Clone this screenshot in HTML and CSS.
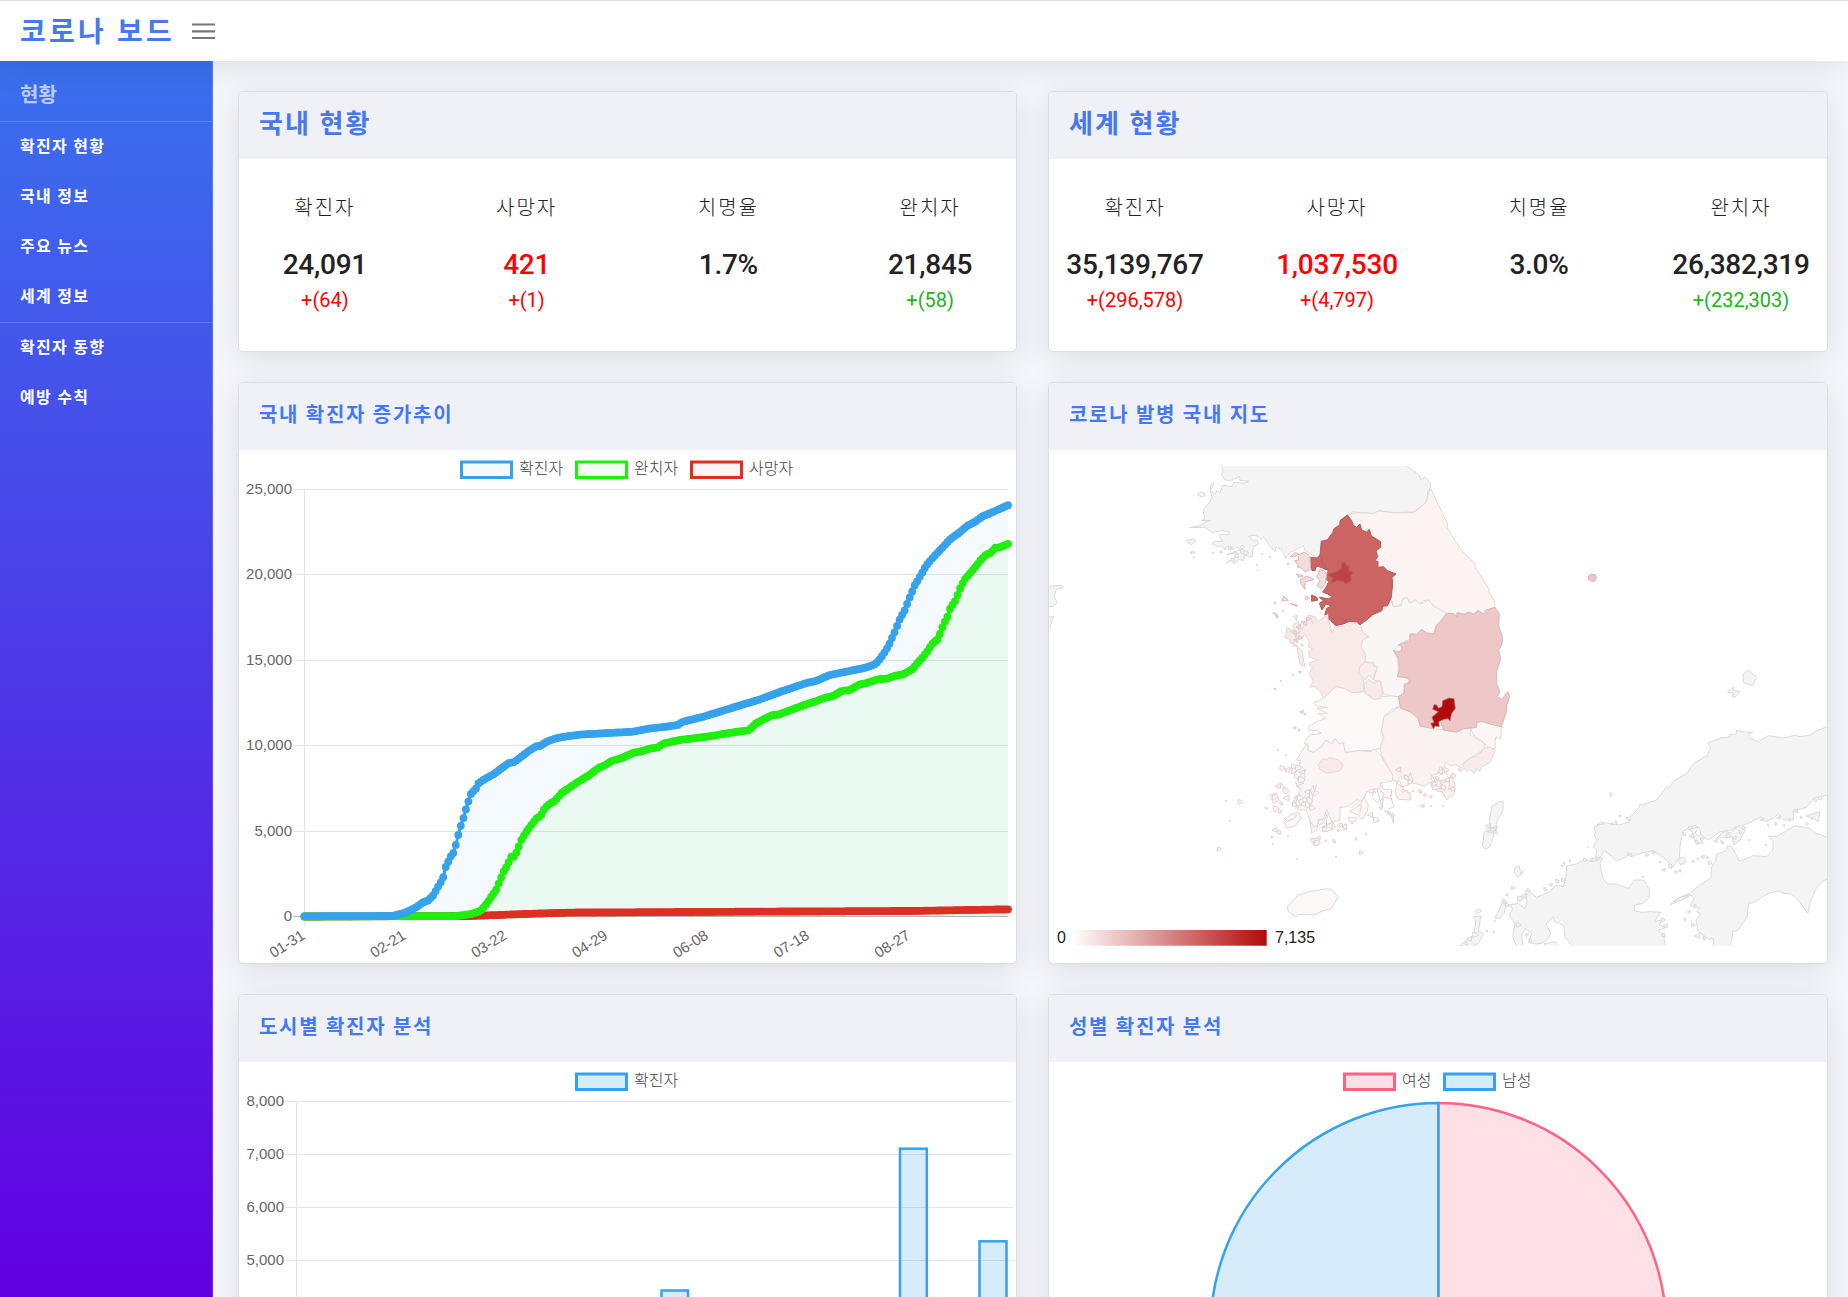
FILE: index.html
```html
<!DOCTYPE html>
<html lang="ko">
<head>
<meta charset="utf-8">
<title>코로나 보드</title>
<link rel="stylesheet" href="styles.css">
</head>
<body>
<header class="topbar">
  <a class="brand">코로나 보드</a>
  <svg class="menu-icon" width="23" height="17" viewBox="0 0 23 17"><path d="M0 1.5H23M0 8.3H23M0 15H23"/></svg>
</header>
<div class="shell">
  <nav class="sidebar">
    <div class="side-title">현황</div>
    <a class="side-link first">확진자 현황</a>
    <a class="side-link">국내 정보</a>
    <a class="side-link">주요 뉴스</a>
    <a class="side-link">세계 정보</a>
    <a class="side-link first">확진자 동향</a>
    <a class="side-link">예방 수칙</a>
  </nav>
  <main class="content">
    <section class="card">
      <h2 class="card-head big">국내 현황</h2>
      <div class="stats">
        <div class="stat"><span class="label">확진자</span><b class="num">24,091</b><span class="diff red">+(64)</span></div>
        <div class="stat"><span class="label">사망자</span><b class="num red">421</b><span class="diff red">+(1)</span></div>
        <div class="stat"><span class="label">치명율</span><b class="num">1.7%</b></div>
        <div class="stat"><span class="label">완치자</span><b class="num">21,845</b><span class="diff green">+(58)</span></div>
      </div>
    </section>
    <section class="card">
      <h2 class="card-head big">세계 현황</h2>
      <div class="stats">
        <div class="stat"><span class="label">확진자</span><b class="num">35,139,767</b><span class="diff red">+(296,578)</span></div>
        <div class="stat"><span class="label">사망자</span><b class="num red">1,037,530</b><span class="diff red">+(4,797)</span></div>
        <div class="stat"><span class="label">치명율</span><b class="num">3.0%</b></div>
        <div class="stat"><span class="label">완치자</span><b class="num">26,382,319</b><span class="diff green">+(232,303)</span></div>
      </div>
    </section>

    <section class="card">
      <h2 class="card-head">국내 확진자 증가추이</h2>
      <svg class="plot" width="777" height="512" viewBox="239 450 777 512">
        <g class="grid">
          <path d="M293 489.5H1008M293 574.5H1008M293 660.5H1008M293 745.5H1008M293 831.5H1008M304.5 489V926"/>
          <path class="zero" d="M293 916.5H1008"/>
        </g>
        <g class="key">
          <rect x="461.500" y="462" width="50" height="15.500" stroke="#36a2eb" fill="#f5fafe"/><text x="519" y="473.500">확진자</text>
          <rect x="576.500" y="462" width="50" height="15.500" stroke="#1fee0f" fill="#f3fef2"/><text x="634" y="473.500">완치자</text>
          <rect x="691.500" y="462" width="50" height="15.500" stroke="#dd2f24" fill="#fef4f4"/><text x="749" y="473.500">사망자</text>
        </g>
        <g class="tick end">
          <text x="292" y="493.500">25,000</text><text x="292" y="578.500">20,000</text><text x="292" y="664.500">15,000</text>
          <text x="292" y="749.500">10,000</text><text x="292" y="835.500">5,000</text><text x="292" y="920.500">0</text>
        </g>
        <g id="dates" class="tick end"></g>
        <g id="areas"></g>
        <g id="trend"></g>
      </svg>
    </section>

    <section class="card">
      <h2 class="card-head">코로나 발병 국내 지도</h2>
      <svg class="plot" width="778" height="512" viewBox="1049 450 778 512">
        <defs>
          <linearGradient id="scale"><stop offset="0" stop-color="#fff"/><stop offset="1" stop-color="#b10b0b"/></linearGradient>
          <clipPath id="frame"><rect x="1049" y="466" width="778" height="479.7"/></clipPath>
        </defs>
        <g clip-path="url(#frame)">
          <g class="land" transform="translate(1040 440) scale(.33333)">
            <path d="M541 70L549 90 545 104 556 120 570 122 598 110 600 121 626 124 612 130 582 126 577 140 548 136 540 158 530 152 526 162 510 151 516 170 510 186 489 210 494 236 485 242 513 241 495 246 483 256 449 263 495 262 516 278 545 271 568 275 565 284 538 284 542 298 550 305 528 304 515 310 533 321 545 316 550 325 566 318 565 330 582 326 588 320 600 328 605 315 614 322 600 330 560 344 590 338 592 348 558 370 580 356 582 372 598 358 610 362 613 345 637 352 640 320 655 312 652 300 638 300 626 288 648 286 663 298 672 290 680 304 690 320 705 335 708 322 725 328 738 356 748 338 760 332 782 322 790 316 794 330 826 350 842 345 843 303 862 298 880 272 898 255 900 243 921 226 937 216 1003 220 1015 212 1066 218 1122 216 1150 195 1162 178 1163 155 1171 143 1171 128 1155 112 1142 120 1136 104 1110 84 1090 70Z"/>
            <path d="M472 165L480 156 494 160 495 168 483 170ZM438 300L465 298 467 306 452 314ZM512 135L520 128 520 138 512 150ZM450 338L460 332 465 340ZM15 440L65 436 70 442 48 450 42 470 52 487 40 500 15 500ZM15 536L42 528 35 545 30 562 15 560Z"/>
          </g>
          <g class="land" transform="translate(1440 660) scale(.33333)">
            <path d="M1180 192L1130 212 1110 226 1075 230 1070 225 1030 234 985 227 955 245 925 232 928 220 938 217 912 216 890 211 888 222 868 224 868 231 840 234 803 250 812 262 803 285 762 310 740 340 700 364 688 383 678 383 650 420 608 434 600 432 598 442 572 470 568 486 560 488 538 495 520 492 490 488 462 502 468 520 462 525 472 542 460 560 470 570 468 595 480 592 493 572 516 590 530 603 560 590 565 575 574 590 600 580 640 572 675 597 700 620 712 598 718 598 720 560 728 515 750 502 765 496 780 505 782 525 805 540 840 515 870 512 890 500 920 492 965 470 975 485 1000 475 1015 462 1030 480 1060 480 1060 452 1100 442 1120 415 1180 402Z"/>
            <path d="M1180 541L1145 525 1125 520 1110 505 1065 497 1040 512 1010 530 985 528 1000 545 998 572 980 590 940 587 898 604 875 560 862 558 860 570 828 585 828 600 815 620 812 655 775 678 750 700 712 715 690 735 755 705 762 715 750 737 780 745 770 755 782 762 768 780 775 815 808 838 820 835 820 870 865 870 875 840 878 815 895 810 922 768 925 730 940 728 960 715 985 700 1015 693 1025 698 1055 703 1075 720 1103 760 1112 722 1130 682 1145 665 1180 650Z"/>
            <path d="M380 618L410 612 430 600 460 605 488 592 480 610 488 655 502 672 530 673 565 685 585 660 610 660 628 688 628 712 610 730 583 735 583 752 605 757 630 755 662 757 643 785 665 780 658 795 680 802 655 810 662 820 675 820 672 835 680 870 410 870 375 833 372 798 358 790 345 786 340 770 330 780 318 792 333 822 312 848 290 852 265 848 275 820 255 805 245 825 250 870 235 870 218 830 225 790 208 768 218 745 205 735 235 730 255 745 262 722 250 705 260 690 290 712 330 695 348 675 370 680 378 650Z"/>
            <path d="M312 852L345 845 358 860 330 870ZM178 425L190 425 188 455 170 485 168 510 160 512 160 530 150 560 138 567 127 560 133 515 150 500 148 480 152 462 155 440ZM225 622L238 618 238 628 250 635 235 652 222 640ZM190 715L200 725 192 760 180 775 165 773 178 748ZM60 857L80 840 100 825 108 780 102 770 122 768 116 815 130 820 115 850 95 860ZM105 755L118 746 125 752 112 762ZM908 45L925 30 950 52 938 76 912 70ZM862 98L880 82 882 92 900 95 885 112 875 110 880 98ZM510 396L518 405 512 410ZM712 598L730 592 738 605 722 615ZM700 725L720 712 748 704 722 722ZM1098 468L1140 455 1135 485 1120 475ZM830 535L855 512 870 520 895 498 915 510 900 540 880 555 878 530ZM750 505L775 502 765 520 780 530 790 550 765 545 760 525ZM470 495L482 486 492 492ZM148 505L172 500 165 520 140 515 168 508"/>
          </g>
          <g transform="translate(1180 500) scale(.33333)">
            <path class="p0" fill="#fcf4f3" d="M751-37L768 0 802 70 802 84 842 148 884 190 886 202 926 266 928 278 942 300 945 322 910 342 895 332 880 342 865 336 850 342 831 338 830 348 800 340 775 330 760 318 745 300 728 302 722 312 705 300 690 310 680 292 668 298 662 318 640 320 632 290 640 240 636 230 648 222 620 212 590 202 586 182 586 150 602 142 602 125 574 108 570 90 560 86 545 96 540 78 528 82 515 62 502 45 530 38 580 40 596 33 640 38 700 38 738 8Z"/>
            <path class="p0" fill="#fbf6f6" d="M540 374L560 360 578 344 605 332 622 318 632 300 640 320 662 318 668 298 680 292 690 310 705 300 722 312 745 300 760 318 800 340 785 360 768 378 762 402 740 398 725 388 710 402 690 400 688 418 665 428 642 452 652 460 655 525 688 538 685 550 672 552 672 580 655 590 630 588 610 580 603 545 580 540 590 510 580 488 556 485 556 462 542 440 550 418 566 410 548 396Z"/>
            <path class="p0" fill="#f9eaea" d="M385 345L405 350 412 366 440 346 447 365 456 398 465 382 495 378 508 364 540 374 548 396 566 410 550 418 542 440 556 462 556 482 540 500 536 520 548 530 552 548 550 575 515 578 492 565 466 560 456 580 430 596 422 575 405 560 388 562 400 545 388 520 397 505 386 490 412 480 388 470 386 455 398 447 384 440 388 428 376 402 360 418 345 407 355 430 345 425 330 430 330 418 312 412 320 402 320 382 345 395 338 375 355 365 360 385 365 362 375 375Z"/>
            <path class="p0" fill="#f9eaea" d="M350 438L366 452 374 500 360 492 355 465ZM352 380L362 372 358 390ZM338 430L352 436 340 440ZM340 350L352 346 350 362ZM328 392L352 402 372 380 350 408ZM392 350L398 372 404 362"/>
            <path class="p0" fill="#fdf8f8" d="M430 596L466 560 492 565 515 578 550 575 580 598 605 590 630 588 655 590 662 618 635 628 612 650 610 675 604 695 612 710 600 745 575 752 535 752 510 757 495 755 490 740 492 728 478 732 465 716 455 732 438 720 425 740 400 757 385 750 384 735 372 730 390 705 425 700 410 692 385 690 384 682 410 665 438 655 415 640 442 640 410 625 442 622 410 618 402 608Z"/>
            <path class="p0" fill="#fbf1f0" d="M662 618L690 635 718 650 720 678 755 685 790 690 830 696 850 686 872 685 870 705 912 728 915 745 870 775 850 790 838 800 825 794 810 798 798 786 790 806 780 800 775 820 752 828 758 845 745 850 735 858 700 850 692 818 682 838 660 830 652 846 638 840 636 825 605 765 600 745 612 710 604 695 612 650Z"/>
            <path class="p0" fill="#fcf6f7" d="M872 685L890 682 890 666 905 664 930 672 945 668 964 680 962 718 948 710 945 722 946 745 930 752 912 728 880 705Z"/>
            <path class="p0" fill="#f9ebeb" d="M915 745L930 742 946 750 935 775 928 788 905 800 898 815 890 805 882 820 870 808 862 816 855 805 838 816 835 805 850 800 852 788 870 775 890 768Z"/>
            <path class="p0" fill="#f9eeee" d="M556 485L566 490 580 488 582 500 594 500 586 515 580 540 566 525 556 540 536 520 540 500Z"/>
            <path class="p0" fill="#f9eaea" d="M566 538L580 548 600 542 608 580 600 596 580 598 555 578 552 552Z"/>
            <path class="p1" fill="#eec7c8" d="M800 340L820 340 831 350 831 338 855 344 865 336 880 342 895 332 910 342 918 330 945 322 958 342 956 380 968 410 966 432 956 450 962 475 950 515 950 550 960 575 952 590 965 598 984 575 989 590 980 615 978 640 964 680 930 672 905 664 890 668 890 682 850 686 830 696 790 690 782 665 755 685 720 678 715 655 690 635 662 625 655 590 672 580 675 552 688 548 688 536 670 532 652 530 658 508 656 478 640 452 662 455 665 440 655 435 690 422 690 402 710 405 725 388 740 400 762 402 768 378 785 360Z"/>
            <path fill="#b10b0b" stroke="#b07070" stroke-width="2" d="M788 602L808 594 822 596 826 625 815 640 810 662 804 656 792 658 776 665 778 680 766 678 760 686 752 670 762 668 756 652 775 635 758 628 762 614 770 615 775 625 786 620Z"/>
            <path class="p2" fill="#cd6464" d="M502 45L515 62 520 76 530 82 540 72 545 90 560 96 568 88 574 108 602 125 602 142 588 152 593 170 584 184 594 184 594 202 610 200 622 212 648 222 636 232 638 250 634 292 622 318 610 318 605 332 578 344 560 360 540 374 530 366 508 364 490 372 467 377 447 358 446 340 434 345 440 325 455 318 438 312 426 330 418 310 430 302 418 292 446 296 458 290 442 282 428 276 438 262 446 245 438 238 440 222 446 212 430 205 410 198 405 212 396 212 390 172 412 174 420 165 424 124 442 120 458 98 462 86 480 74 480 62Z"/>
            <path class="p2" fill="#cd6464" d="M424 168L426 188 446 210 430 205M394 286L408 290 414 300 395 304ZM484 356L498 362 488 370"/>
            <path class="p2" fill="#c04343" d="M448 222L470 216 484 206 486 188 496 188 502 200 508 196 506 212 520 218 510 228 514 240 498 252 490 244 470 242 452 250 460 235 444 224Z"/>
            <path class="p1" fill="#f3dcdd" d="M344 182L356 180 354 165 375 156 390 170 392 208 375 215 358 200ZM410 232L420 208 432 212 440 222 436 250 424 266 412 258 420 242ZM330 170L345 158 356 162 345 170ZM360 240L380 228 402 238 375 246 375 268 364 252ZM350 222L370 228 355 232ZM305 302L312 288 325 302ZM330 310L352 318ZM278 338L294 350 286 340Z"/>
          </g>
          <g transform="translate(1180 740) scale(.33333)">
            <path class="p0" fill="#fbf5f6" d="M380 10L385 32 400 37 425 20 438 0 455 12 465-4 478 12 490 8 496 38 535 32 575 35 583 26 603 48 638 105 638 122 600 130 606 150 582 145 588 160 560 155 552 175 540 185 532 178 524 185 502 200 480 202 480 240 455 245 440 208 430 238 415 240 410 270 395 280 390 240 378 210 355 210 350 180 362 150 345 125 378 90 358 75 362 62 350 60Z"/>
            <path class="p0" fill="#f9e9ea" d="M415 75L430 55 440 60 448 52 475 60 490 75 480 92 440 100 420 88Z"/>
            <path class="p0" fill="#fdf8f8" d="M322 500L355 465 390 455 440 446 455 448 475 470 455 505 415 518 405 524 355 524 347 531 325 515Z"/>
            <path class="p0" fill="#fbf5f6" d="M310 245L330 225 355 215 365 235 345 258 320 265ZM508 215L540 195 552 172 565 195 562 215 545 240 535 225ZM505 232L530 232 525 245 508 245ZM592 150L605 135 610 148 636 148 632 175 610 172 606 205 600 180ZM390 205L388 160 400 135 402 150 418 158 398 170 392 195M270 165L290 160 298 180 280 190ZM345 200L352 170 360 195ZM430 260L445 250 465 265 440 275ZM395 295L420 295 415 315 400 315ZM612 210L640 230 640 250 635 232Z"/>
            <path class="p0" fill="#fbf1f0" d="M650 130L668 140 675 155 690 158 692 180 655 178 645 160ZM780 120L800 125 815 105 826 135 822 160 800 180 790 160 778 150 790 140ZM752 130L780 120 785 145 758 150Z"/>
            <!-- inlets and headlands of the south-west coast -->
            <path class="coast" d="M345 100L352 88 362 104 372 94 376 114 358 122 372 130 348 138 364 148M350 165L342 185 352 205 372 190 365 172 356 160M372 168L392 195 378 206M392 150L398 168 410 135M388 240L402 262 428 250 442 222 438 262 458 244 466 262 480 248M418 266L434 258 428 276M486 262L496 250 500 266 484 272M512 205L530 190 545 198 538 218M566 150L582 148 576 170 590 188 606 178M598 150L612 160 606 182M635 150L632 170 642 200 624 208M575 225L592 245 578 236M620 212L640 232 641 248M648 128L660 122 664 142 690 132 686 112 692 100M665 160L680 150 690 165M750 100L765 120 758 132 784 142 768 152 790 158M780 105L798 96 806 116 824 100M788 128L810 122 806 148 822 140M310 232L322 244 342 236 350 222M300 90L315 82 318 96 338 84 334 102 352 92M290 140L305 130 312 145M340 192L346 168 356 178"/>
          </g>
          <path class="ulleung" d="M1588.5 576l3-2 4 .8 1 3-2 3.500-4-.2-2-2z"/>
          <g id="islets"></g>
        </g>
        <rect x="1072" y="930" width="194.700" height="15.700" fill="url(#scale)"/>
        <text class="range" x="1057" y="942.500">0</text><text class="range" x="1275" y="942.500">7,135</text>
      </svg>
    </section>

    <section class="card">
      <h2 class="card-head">도시별 확진자 분석</h2>
      <svg class="plot" width="777" height="512" viewBox="239 1062 777 512">
        <g class="grid"><path d="M285 1101.500H1013M285 1154.500H1013M285 1207.500H1013M285 1260.500H1013M296.500 1101V1500"/></g>
        <g class="key"><rect x="576.500" y="1074" width="50" height="15.500" stroke="#36a2eb" fill="#d7ecfb"/><text x="634" y="1085.500">확진자</text></g>
        <g class="tick end"><text x="284" y="1105.500">8,000</text><text x="284" y="1158.500">7,000</text><text x="284" y="1211.500">6,000</text><text x="284" y="1264.500">5,000</text></g>
        <g class="bars">
          <rect x="661.500" y="1290.500" width="26.500" height="300"/>
          <rect x="900" y="1148.700" width="26.800" height="450"/>
          <rect x="979.500" y="1241.300" width="27" height="350"/>
        </g>
      </svg>
    </section>

    <section class="card">
      <h2 class="card-head">성별 확진자 분석</h2>
      <svg class="plot" width="778" height="512" viewBox="1049 1062 778 512">
        <g class="key">
          <rect x="1344.500" y="1074" width="50" height="15.500" stroke="#ff6384" fill="#ffe0e6"/><text x="1402" y="1085.500">여성</text>
          <rect x="1444.500" y="1074" width="50" height="15.500" stroke="#36a2eb" fill="#d7ecfb"/><text x="1502" y="1085.500">남성</text>
        </g>
        <path d="M1438.300 1331V1103A228 228 0 0 1 1438.300 1559Z" fill="#ffe0e6" stroke="#ff6384" stroke-width="2.500"/>
        <path d="M1438.300 1559A228 228 0 0 1 1438.300 1103Z" fill="#d7ecfb" stroke="#36a2eb" stroke-width="2.500"/>
      </svg>
    </section>
  </main>
</div>
<script src="charts.js"></script>
</body>
</html>
```
FILE: styles.css
```css
* { box-sizing: border-box; }
html, body { margin: 0; height: 100%; overflow: hidden; }
body {
  display: flex;
  flex-direction: column;
  background: #f6f7fc;
  color: #222;
  font-family: Roboto, "Noto Sans CJK KR", sans-serif;
}
.topbar {
  position: relative;
  z-index: 2;
  flex: none;
  display: flex;
  align-items: center;
  gap: 17px;
  height: 61px;
  padding: 0 20px;
  background: #fff;
  border-top: 1px solid #d9dadf;
  box-shadow: 0 6px 32px rgba(0, 0, 0, .1);
}
.brand {
  padding-top: 4px;
  color: #4579ee;
  font-size: 28px;
  font-weight: 700;
  letter-spacing: 3.2px;
  line-height: 56px;
}
.menu-icon { stroke: #777; stroke-width: 2.2; fill: none; }
.shell { flex: 1; display: flex; min-height: 0; overflow: hidden; }
.sidebar {
  flex: none;
  width: 213px;
  padding-top: 7px;
  background: linear-gradient(#3a70ee, #6100e0);
  border-right: 1px solid rgba(255, 255, 255, .15);
  color: #fff;
  font-weight: 700;
}
.side-title {
  height: 53px;
  padding-left: 20px;
  font-size: 20px;
  line-height: 55px;
  color: rgba(255, 255, 255, .68);
}
.side-link {
  display: block;
  height: 50px;
  padding-left: 20px;
  font-size: 16px;
  letter-spacing: 1.3px;
  line-height: 50px;
}
.side-link.first { height: 51px; border-top: 1px solid rgba(255, 255, 255, .17); }
.content {
  flex: 1;
  display: grid;
  grid-template-columns: 779px 1fr;
  grid-template-rows: 261px 582px 582px;
  gap: 30px 31px;
  padding: 30px 20px 0 25px;
}
.card {
  min-width: 0;
  overflow: hidden;
  background: #fff;
  border: 1px solid #dcdde1;
  border-radius: 5px;
  box-shadow: 0 6px 32px rgba(0, 0, 0, .11);
}
.card-head {
  margin: 0;
  height: 67px;
  padding-left: 20px;
  background: #f0f1f7;
  color: #4579ee;
  font-size: 20px;
  font-weight: 700;
  letter-spacing: 1.7px;
  line-height: 64px;
}
.card-head.big { font-size: 26px; letter-spacing: 2.1px; line-height: 65px; }
.stats { display: grid; grid-template-columns: repeat(4, 1fr); margin: 0 -15px; padding-top: 34px; }
.stat { display: flex; flex-direction: column; align-items: center; }
.label { font-size: 20px; font-weight: 300; letter-spacing: 2px; line-height: 30px; }
.num { margin-top: 25px; font-size: 28px; font-weight: 500; letter-spacing: -.25px; line-height: 34px; }
.diff { margin-top: 3px; font-size: 20px; line-height: 30px; }
.red { color: #f00; }
.green { color: #1bb41b; }
.plot { display: block; }
.grid path { stroke: #e4e4e4; fill: none; }
.grid .zero { stroke: #bbb; }
.key rect { stroke-width: 3; }
.key text { font: 300 16px "Noto Sans CJK KR", sans-serif; fill: #444; }
.tick text { font: 15px "Liberation Sans", Arial, sans-serif; fill: #666; }
.end text { text-anchor: end; }
.bars rect { fill: rgba(54, 162, 235, .2); stroke: #36a2eb; stroke-width: 2.500; }
.land path { fill: #f4f4f4; stroke: #d9d9d9; stroke-width: 3; stroke-linejoin: round; }
.p0 { stroke: #e2d6d6; stroke-width: 3; stroke-linejoin: round; }
.p1 { stroke: #d9b6b7; stroke-width: 3; stroke-linejoin: round; }
.p2 { stroke: #b45a5a; stroke-width: 3; stroke-linejoin: round; }
.coast { fill: none; stroke: #e0d2d3; stroke-width: 3; stroke-linejoin: round; }
.ulleung { fill: #eec7c8; stroke: #d9b6b7; }
.islet { stroke-width: 1; }
.range { font: 16px "Liberation Sans", Arial, sans-serif; fill: #222; }
```
FILE: charts.js
```js
const NS = 'http://www.w3.org/2000/svg';
function add(parent, tag, attrs, text) {
  const el = document.createElementNS(NS, tag);
  for (const k in attrs) el.setAttribute(k, attrs[k]);
  if (text) el.textContent = text;
  parent.appendChild(el);
}

// Cumulative totals as [day, people] pairs; days in between are interpolated.
const confirmed = [[0,11],[34.8,30],[40,220],[44.3,540],[46.7,800],[49,940],[51,1230],[53,1750],[54,2000],[55,2300],[56,2900],[58,3520],[59,3720],[60,4190],[61,4770],[62,5310],[63,5760],[64,6270],[65,6740],[66,7170],[68,7500],[69,7800],[71.6,8060],[75,8330],[78,8670],[81,8980],[83.3,9050],[86,9360],[89,9700],[92,9970],[93.3,9970],[96.3,10260],[100,10440],[104,10550],[110,10660],[130.3,10820],[136.4,11000],[144.4,11130],[148,11220],[150,11400],[158.6,11716],[172.8,12365],[180.9,12724],[189,13172],[199,13665],[203,13800],[208.2,14135],[222.3,14560],[225.8,14740],[227.4,14920],[229.8,15400],[231.8,15905],[234,16640],[236,17383],[238,17920],[240,18680],[242,19377],[244.2,19937],[246.6,20560],[249.6,21080],[252.7,21550],[255.7,22043],[259.8,22490],[262.8,22872],[265.8,23096],[268.9,23430],[271.9,23610],[273.9,23745],[279,24080]];
const recovered = [[0,0],[59.5,20],[65.5,130],[69.6,310],[72.2,740],[74,1140],[76,1568],[77,1926],[79,2643],[80,2867],[82,3495],[83.3,3495],[85,4100],[86.2,4547],[87.8,4928],[90.4,5443],[92.4,5824],[93.5,5824],[95.3,6362],[97.3,6608],[99.1,6743],[102,7236],[108,7840],[113,8288],[116.5,8690],[119.6,8893],[121.6,9095],[126.2,9297],[130.3,9588],[133.3,9655],[136.4,9812],[140,9900],[142.4,10125],[148.5,10327],[160.6,10551],[168.7,10753],[176.4,10910],[178.8,11290],[185.3,11783],[188,11828],[200,12477],[203,12612],[206.1,12791],[209.6,12903],[213.2,13217],[216.3,13262],[220.3,13598],[222.3,13642],[227.4,13889],[231.4,13934],[233.5,14068],[237.5,14180],[241.2,14494],[243,14830],[245,15143],[247,15524],[249,15972],[251.3,16263],[252.3,16667],[253.3,17048],[255.3,17652],[256.1,18056],[258.1,18481],[259.1,18862],[260.2,19288],[262.2,19825],[264.2,20138],[266.2,20497],[268.3,20900],[270.3,21192],[272,21281],[274,21595],[275.3,21595],[279,21819]];
const deaths = [[0,0],[66,30],[90,160],[106,230],[173,280],[241,325],[279,421]];

function drawSeries(keys, color) {
  const g = document.getElementById('trend');
  const pts = [];
  let k = 0;
  for (let d = 0; d <= 279; d++) {
    while (k < keys.length - 2 && keys[k + 1][0] < d) k++;
    const [d0, v0] = keys[k], [d1, v1] = keys[k + 1];
    const v = v0 + (v1 - v0) * (d - d0) / (d1 - d0);
    pts.push([304.5 + d * 703.5 / 279, 916.5 - v * 427 / 25000]);
  }
  const line = pts.map(p => p[0].toFixed(1) + ' ' + p[1].toFixed(1)).join('L');
  add(document.getElementById('areas'), 'path', { d: 'M' + line + 'L1008 916.5L304.5 916.5Z', fill: color, 'fill-opacity': .05 });
  add(g, 'path', { d: 'M' + line, fill: 'none', stroke: color, 'stroke-width': 3 });
  pts.forEach(p => add(g, 'circle', { cx: p[0].toFixed(1), cy: p[1].toFixed(1), r: 3.9, fill: color }));
}
drawSeries(deaths, '#dd2f24');
drawSeries(recovered, '#1fee0f');
drawSeries(confirmed, '#36a2eb');

['01-31', '02-21', '03-22', '04-29', '06-08', '07-18', '08-27'].forEach((t, i) => {
  const x = 306 + i * 100.86;
  add(document.getElementById('dates'), 'text', { x, y: 938, transform: `rotate(-32 ${x} 938)` }, t);
});

// Small islands: x, y, radius triples, grouped by fill and outline.
function islets(list, fill, stroke) {
  const g = document.getElementById('islets');
  for (let i = 0; i < list.length; i += 3) {
    const [x, y, r] = list.slice(i, i + 3);
    const p = [];
    for (let a = 0; a < 6; a++) {
      const q = r * (.5 + ((i * 7 + a * 5) % 9) / 9);
      p.push((x + q * Math.cos(a * 1.047)).toFixed(1) + ' ' + (y + q * .8 * Math.sin(a * 1.047)).toFixed(1));
    }
    add(g, 'path', { d: 'M' + p.join('L') + 'Z', fill, stroke, class: 'islet' });
  }
}
islets([1278,750,1,1286,755,.7,1282,768,2.5,1288,770,3,1293,766,3,1298,768,3,1303,772,2.5,1296,776,3,1301,780,3.5,1279,786,3,1285,790,4,1275,797,3,1287,798,3.5,1281,803,2,1276,809,3,1280,812,2,1294,804,3,1300,798,3,1304,804,3,1309,800,4,1312,808,3,1308,792,3,1266,808,1.5,1240,802,2.5,1226,801,1,1230,821,.7,1219,849,2,1275,830,2.5,1279,832,2.5,1272,837,1.2,1288,836,.8,1312,840,2.5,1317,843,3,1319,838,2,1334,841,2,1326,841,1,1345,827,3,1338,830,1.5,1341,825,2,1330,826,4,1324,829,3,1321,822,3,1356,839,1.5,1366,834,1.2,1361,853,2,1336,857,.7,1297,859,.8,1376,820,3,1371,815,3,1389,812,2,1393,815,1.5,1381,808,2,1352,823,1,1273,844,.7], '#fbf5f6', '#e0d2d3');
islets([1423,806,2,1420,791,2,1425,795,1.5,1431,797,1.5,1413,791,1,1434,784,2.5,1441,772,3,1437,778,2.5,1446,770,2.5,1448,780,3,1443,787,3,1453,789,2.5,1399,770,3,1406,777,3,1410,782,2.5,1443,806,.7,1431,806,.7,1453,776,2.5], '#fbf1f0', '#e2cccc');
islets([1288,564,1,1298,567,1,1275,603,1,1283,611,.8,1296,605,1.500,1307,598,2,1277,617,1.5,1302,645,1,1300,672,1.2,1293,675,.7,1281,681,.8,1275,689,1,1302,712,2,1305,714,1,1295,728,1.2,1299,730,1,1305,623,2.5,1308,619,2,1299,627,2.5,1295,632,2,1300,638,2,1296,640,2], '#f3dcdd', '#dfc4c5');
islets([1191,553,1,1194,557,.8,1213,553,1,1221,552,1.500,1225,549,1,1233,560,2,1237,556,2.500,1242,551,3,1246,553,2.500,1257,565,1,1258,570,.5,1262,554,.8,1270,557,.8,1231,547,1.500,1493,830,2.500,1489,826,3,1496,832,2,1513,888,2,1507,895,1.500,1504,902,2,1520,899,3,1525,896,3,1528,890,2,1507,905,2,1521,873,.8,1564,863,1.500,1570,861,1,1562,866,1,1557,881,2.500,1563,880,2,1551,885,2,1545,889,2,1475,935,3,1470,939,3,1466,943,2,1487,931,1,1494,932,1,1495,921,.8,1620,816,1,1612,824,1.500,1616,822,1.500,1627,818,1,1629,820,1,1588,847,.7,1585,860,2,1592,860,2,1596,859,2,1660,862,1,1664,870,2,1670,866,2.500,1676,872,1.5,1680,871,1.5,1693,861,1.5,1698,859,1,1703,857,2,1707,857,1.5,1710,863,2,1643,877,1,1653,852,2,1647,855,1.5,1630,855,2,1684,834,2,1690,828,2,1692,836,2.5,1697,842,2.5,1702,839,1.5,1716,841,2,1722,842,2,1728,836,2.500,1735,838,2,1740,832,2,1744,828,2,1762,820,1.5,1768,825,1.2,1776,824,1.5,1779,818,2,1784,825,1.2,1790,820,1.500,1796,811,2.500,1801,817,1.5,1807,824,1.5,1812,819,1,1815,800,2,1820,798,2,1766,845,.8,1749,840,.5,1695,906,1.5,1689,912,1.5,1685,919,1.5,1693,925,2,1698,936,3,1704,938,2,1663,920,2,1666,926,2.5,1663,935,2,1518,925,2.5,1527,935,2,1530,940,2], '#f1f1f1', '#d9d9d9');
```
